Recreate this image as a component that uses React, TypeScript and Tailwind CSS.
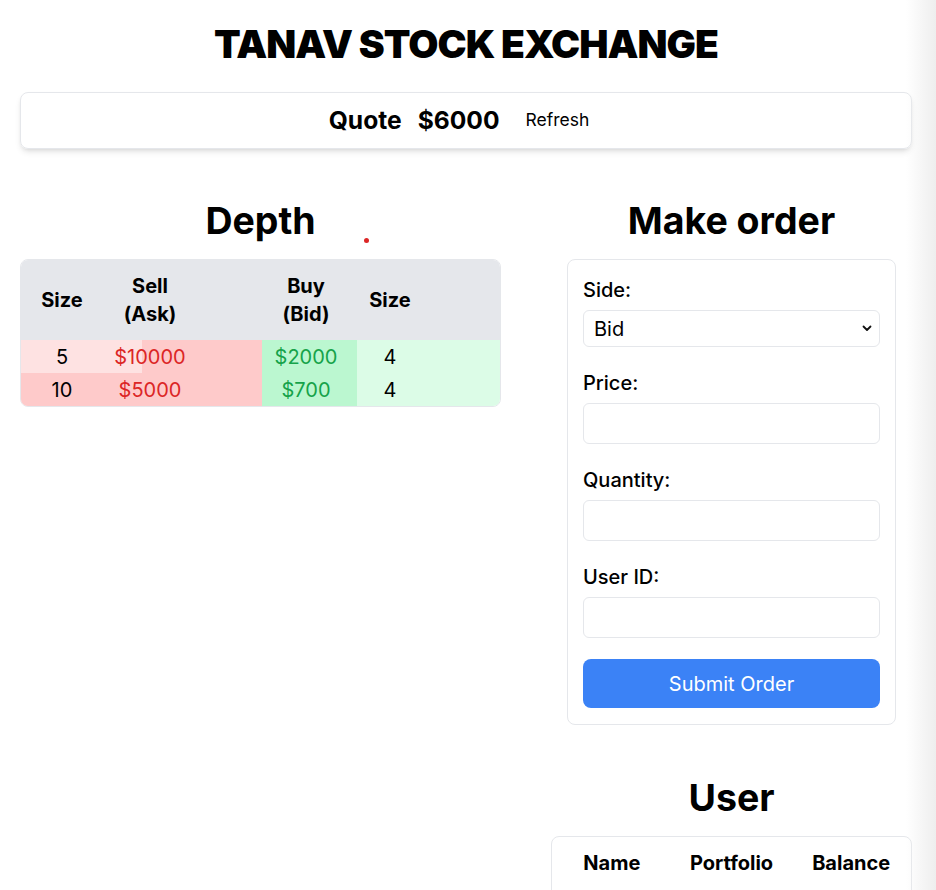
import React from "react";

const asks = [
  { size: 5, price: 10000 },
  { size: 10, price: 5000 },
];
const bids = [
  { size: 4, price: 2000 },
  { size: 4, price: 700 },
];
const maxSize = 10;

export default function App() {
  return (
    <div className="relative min-h-[890px] w-[936px] overflow-hidden bg-white text-black" style={{ fontFamily: "Inter, 'Noto Sans', sans-serif" }}>
      <div className="w-[932px] px-5 pt-[24px]">
        <h1 className="text-center text-[39px] leading-[40px] font-black tracking-tight">TANAV STOCK EXCHANGE</h1>
        <div className="mt-[28px] flex h-[57px] items-center justify-center rounded-lg border border-gray-200 pr-[14px] shadow-md">
          <span className="text-[24.6px] font-bold">Quote</span>
          <span className="ml-4 text-[24.6px] font-bold">$6000</span>
          <button className="ml-[26px] text-[17.5px]">Refresh</button>
        </div>

        <div className="mt-[52px] flex justify-between">
          {/* Depth */}
          <div className="relative w-[481px]">
            <h2 className="text-center text-[37.5px] leading-[40px] font-bold">Depth</h2>
            <div className="absolute left-[344px] top-[37px] h-[5px] w-[5px] rounded-full bg-[#dc2626]" />
            <div className="mt-[18px] overflow-hidden rounded-lg border border-gray-200">
              <div className="flex h-[80px] items-center bg-[#e5e7eb] text-xl leading-7 font-bold">
                <div className="flex w-[241px] items-center">
                  <div className="w-[82px] text-center">Size</div>
                  <div className="w-[94px] text-center">Sell<br />(Ask)</div>
                </div>
                <div className="flex items-center">
                  <div className="w-[88px] text-center">Buy<br />(Bid)</div>
                  <div className="w-[80px] text-center">Size</div>
                </div>
              </div>
              {asks.map((a, i) => (
                <div key={i} className="flex h-[33px] text-xl">
                  <div className="relative flex w-[241px] items-center bg-[#fee2e2]">
                    <div className="absolute right-0 top-0 h-full bg-[#fecaca]" style={{ width: `${(a.size / maxSize) * 100}%` }} />
                    <div className="relative w-[82px] text-center">{a.size}</div>
                    <div className="relative w-[94px] text-center text-[#dc2626]">${a.price}</div>
                  </div>
                  <div className="relative flex flex-1 items-center bg-[#dcfce7]">
                    <div className="absolute left-0 top-0 h-full bg-[#bbf7d0]" style={{ width: `${(bids[i].size / maxSize) * 100}%` }} />
                    <div className="relative w-[88px] text-center text-[#16a34a]">${bids[i].price}</div>
                    <div className="relative w-[80px] text-center">{bids[i].size}</div>
                  </div>
                </div>
              ))}
            </div>
          </div>

          {/* Right column */}
          <div className="w-[361px]">
            <h2 className="text-center text-[37.5px] leading-[40px] font-bold">Make order</h2>
            <div className="mx-4 mt-[18px] rounded-lg border border-gray-200 px-[15px] pt-4 pb-4">
              <label className="block text-xl leading-7 font-medium">Side:</label>
              <div className="relative mt-1.5">
                <select className="h-[37px] w-full appearance-none rounded-md border border-gray-200 bg-white px-2.5 text-xl">
                  <option>Bid</option>
                  <option>Ask</option>
                </select>
                <svg className="pointer-events-none absolute right-[8px] top-[15px]" width="10" height="7" viewBox="0 0 10 7" fill="none">
                  <path d="M1.5 1.5 L5 5 L8.5 1.5" stroke="#111" strokeWidth="1.8" strokeLinecap="round" strokeLinejoin="round" />
                </svg>
              </div>
              <label className="mt-[22px] block text-xl leading-7 font-medium">Price:</label>
              <input className="mt-1.5 block h-[41px] w-full rounded-md border border-gray-200 px-2.5 text-xl" />
              <label className="mt-[22px] block text-xl leading-7 font-medium">Quantity:</label>
              <input className="mt-1.5 block h-[41px] w-full rounded-md border border-gray-200 px-2.5 text-xl" />
              <label className="mt-[22px] block text-xl leading-7 font-medium">User ID:</label>
              <input className="mt-1.5 block h-[41px] w-full rounded-md border border-gray-200 px-2.5 text-xl" />
              <button className="mt-[21px] h-[49px] w-full rounded-lg bg-[#3b82f6] text-xl text-white">Submit Order</button>
            </div>

            <h2 className="mt-[53px] text-center text-[37.5px] leading-[40px] font-bold">User</h2>
            <div className="mt-[18px] h-[80px] rounded-lg border border-gray-200">
              <div className="grid grid-cols-3 pt-3 text-xl leading-7 font-bold">
                <div className="text-center">Name</div>
                <div className="text-center">Portfolio</div>
                <div className="text-center">Balance</div>
              </div>
            </div>
          </div>
        </div>
      </div>
      <div className="pointer-events-none absolute right-0 top-0 h-full w-[30px] bg-gradient-to-r from-white/0 to-[#eeeeee]" />
    </div>
  );
}
